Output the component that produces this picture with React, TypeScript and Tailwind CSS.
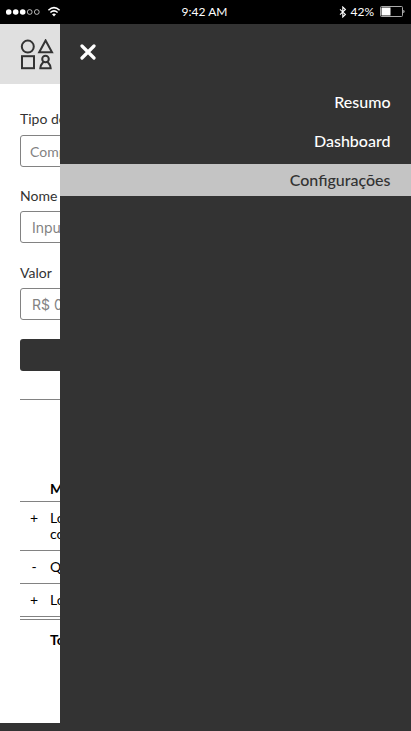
import React from "react";

const lato = "font-['Lato','Liberation_Sans',sans-serif]";

function StatusBar() {
  return (
    <header className="flex h-6 shrink-0 items-center bg-black text-[12px] text-white">
      <div className="flex flex-1 items-center pl-[6px]">
        <svg width="56" height="14" viewBox="0 0 56 14" fill="none">
          <circle cx="2.7" cy="7" r="2.8" fill="white" />
          <circle cx="9.7" cy="7" r="2.8" fill="white" />
          <circle cx="16.7" cy="7" r="2.8" fill="white" />
          <circle cx="23.7" cy="7" r="2.4" stroke="white" strokeWidth="0.7" />
          <circle cx="30.8" cy="7" r="2.4" stroke="white" strokeWidth="0.7" />
          <path d="M42.4 5.2 Q48 0 53.6 5.2" stroke="white" strokeWidth="1.5" />
          <path d="M44.4 7.5 Q48 4.3 51.6 7.5" stroke="white" strokeWidth="1.5" />
          <path d="M46 9.3 Q48 7.6 50 9.3 L48 11.4 Z" fill="white" />
        </svg>
      </div>
      <span className="pr-[2px] leading-6">9:42 AM</span>
      <div className="flex flex-1 items-center justify-end pr-[6px]">
        <svg width="8" height="12" viewBox="0 0 8 12" fill="none" stroke="white" strokeWidth="1.1">
          <path d="M1 3.3 L6.4 8.4 L3.8 11 V1 L6.4 3.5 L1 8.6" />
        </svg>
        <span className="ml-[3px] leading-6">42%</span>
        <svg className="ml-[6px]" width="25" height="12" viewBox="0 0 25 12" fill="none">
          <rect x="0.5" y="0.5" width="22" height="10" rx="1" stroke="#aaa" />
          <rect x="1.5" y="1.5" width="9" height="8" fill="white" />
          <path d="M23.5 4 H24 Q25 5.5 24 7 H23.5 Z" fill="white" />
        </svg>
      </div>
    </header>
  );
}

function Logo() {
  return (
    <svg width="34" height="32" viewBox="0 0 34 32" fill="none" stroke="#333" strokeWidth="2">
      <circle cx="7.8" cy="7.6" r="6" />
      <path d="M25.6 1.4 L32 13.2 H19.2 Z" />
      <rect x="2" y="17.2" width="12" height="12" />
      <circle cx="25.5" cy="20" r="3.3" />
      <path d="M23.4 22.8 C22.8 24.4 20.3 25 20.3 29.2 H30.7 C30.7 25 28.2 24.4 27.6 22.8" />
    </svg>
  );
}

type FieldProps = { label: string; value: string; labelClass: string; inputClass: string };

function Field({ label, value, labelClass, inputClass }: FieldProps) {
  return (
    <div className="w-[371px]">
      <div className={`text-[14px] leading-[14px] text-[#333] ${labelClass}`}>{label}</div>
      <div className={`flex h-8 items-center rounded-[3px] border border-[#828282] text-[14px] text-[#828282] ${inputClass}`}>
        {value}
      </div>
    </div>
  );
}

type RowProps = { sign: string; lines: string[]; height: string };

function Row({ sign, lines, height }: RowProps) {
  return (
    <div className={`flex w-[371px] border-b border-[#828282] pt-[8px] text-[14px] leading-[16px] ${height}`}>
      <span className="w-[30px] pr-[2px] text-center">{sign}</span>
      <span>{lines.map((line) => <span className="block" key={line}>{line}</span>)}</span>
    </div>
  );
}

function Page() {
  return (
    <main className="flex w-[60px] shrink-0 flex-col overflow-hidden whitespace-nowrap bg-white text-black">
      <div className="flex h-[60px] shrink-0 items-center bg-[#e0e0e0] pl-5 pt-px">
        <Logo />
      </div>
      <div className="flex flex-col pl-5 pt-[28px]">
        <Field label="Tipo de transação" value="Compra" labelClass="h-[23px]" inputClass="pl-[9px]" />
        <Field label="Nome" value="Input" labelClass="mt-[22px] h-[22px]" inputClass="pl-[11px] font-['Inter',sans-serif]" />
        <Field label="Valor" value="R$ 0,00" labelClass="mt-[23px] h-[22px]" inputClass="pl-[11px] font-['Inter',sans-serif]" />
      </div>
      <div className="ml-5 mt-[19px] h-8 w-[371px] shrink-0 rounded-[3px] bg-[#333]" />
      <div className="ml-5 mt-[28px] h-px w-[371px] shrink-0 bg-[#828282]" />
      <div className="mt-[81px] pl-5">
        <div className="h-[21px] w-[371px] border-b border-[#828282] pl-[30px] text-[14px] font-bold leading-[16px]">Mercadoria</div>
        <Row sign="+" lines={["Lorem ipsum dolor", "consectetur"]} height="h-[49px]" />
        <Row sign="-" lines={["Quisque"]} height="h-[33px]" />
        <Row sign="+" lines={["Lorem ipsum"]} height="h-[33px]" />
        <div className="h-[3px] w-[371px] border-b border-[#828282]" />
        <div className="pl-[30px] pt-[12px] text-[14px] font-bold leading-[16px]">Total</div>
      </div>
    </main>
  );
}

function Drawer() {
  return (
    <aside className="flex-1 bg-[#333]">
      <div className="flex h-[62px] items-start pl-[20px] pt-[20px]">
        <svg width="17" height="16" viewBox="0 0 17 16" fill="none" stroke="white" strokeWidth="3.2" strokeLinecap="round">
          <path d="M2 2 L14 14 M14 2 L2 14" />
        </svg>
      </div>
      <nav className="flex flex-col gap-[7px] text-right text-[16px] font-medium leading-8 text-white">
        <a className="h-8 pr-[20.5px]">Resumo</a>
        <a className="h-8 pr-[20.5px]">Dashboard</a>
        <a className="h-8 bg-[#c4c4c4] pr-[20.5px] text-[#333]">Configurações</a>
      </nav>
    </aside>
  );
}

export default function App() {
  return (
    <div className={`flex h-[731px] w-[411px] flex-col overflow-hidden bg-[#333] ${lato}`}>
      <StatusBar />
      <div className="flex h-[699px]">
        <Page />
        <Drawer />
      </div>
    </div>
  );
}
